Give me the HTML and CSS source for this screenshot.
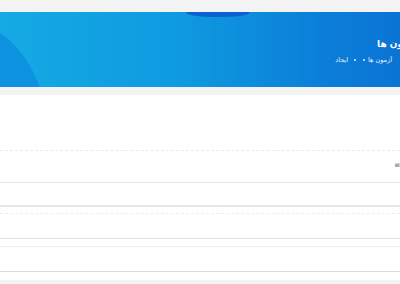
FILE: index.html
```html
<!DOCTYPE html>
<html lang="fa" dir="rtl">
<head>
    <meta charset="UTF-8">
    <meta name="viewport" content="width=device-width, initial-scale=1.0">
    <title>ایجاد آزمون</title>
    <link rel="stylesheet" href="styles.css">
</head>
<body>

<div class="topbar"></div>

<header class="hero">
    <div class="hero-inner">
        <h1 class="hero-title">آزمون ها</h1>
        <div class="crumbs">
            <span class="crumb">آزمون ها</span>
            <span class="dot"></span>
            <span class="crumb">ایجاد</span>
        </div>
    </div>
</header>

<div class="card">
    <div class="card-head"></div>
    <div class="row row-first"><span class="row-icon"></span></div>
    <div class="row row-a"></div>
    <div class="row row-b"></div>
    <div class="row row-c"></div>
    <div class="row row-d"></div>
    <div class="row row-e"></div>
    <div class="row row-f"></div>
</div>

</body>
</html>
```

FILE: styles.css
```css
body {
    margin: 0;
    padding: 0;
    background-color: #f3f3f3;
    font-family: 'DejaVu Sans', sans-serif;
    overflow: hidden;
}

.topbar {
    height: 12px;
    background-color: #f3f3f3;
}

.hero {
    height: 75px;
    background: linear-gradient(90deg, #15aae4 0%, #0e9ae0 45%, #0b7fd8 80%, #0a74d5 100%);
    position: relative;
    overflow: hidden;
}

/* decorative blobs */
.hero::before {
    content: "";
    position: absolute;
    top: 0;
    left: 186px;
    width: 64px;
    height: 5px;
    border-radius: 0 0 24px 24px / 0 0 5px 5px;
    background-color: #0d62d2;
}

.hero::after {
    content: "";
    position: absolute;
    top: 4px;
    left: -150px;
    width: 196px;
    height: 220px;
    border-radius: 50%;
    background-color: #0d92e0;
}

.hero-inner {
    position: relative;
    z-index: 1;
    margin-right: -17px;
    padding-top: 26px;
    color: #fff;
}

.hero-title {
    margin: 0;
    font-size: 9px;
    font-weight: bold;
    line-height: 12px;
}

.crumbs {
    display: flex;
    align-items: center;
    gap: 3px;
    margin-top: 6px;
    font-size: 6.5px;
    line-height: 8px;
    margin-right: 25px;
    color: #eaf5fd;
}

.crumbs::before {
    content: "";
    width: 2px;
    height: 2px;
    border-radius: 50%;
    background-color: #e6f3fc;
    margin-left: 1px;
    order: 1;
}

.crumb:first-child {
    order: 0;
}

.dot {
    order: 2;
    width: 2px;
    height: 2px;
    border-radius: 50%;
    background-color: #e6f3fc;
    margin: 0 3px;
}

.crumb:last-child {
    order: 3;
}

.card {
    margin-top: 8px;
    background-color: #fff;
}

.card-head {
    height: 55px;
    border-bottom: 1px dashed #ececec;
}

.row {
    position: relative;
}

.row-first {
    height: 31px;
    border-bottom: 1px solid #e6e6e6;
}

.row-icon {
    position: absolute;
    right: 0;
    top: 12px;
    width: 4px;
    height: 3px;
    border-top: 1px solid #d3d7db;
    border-right: 1px solid #d3d7db;
    background-color: #a4acb5;
}

.row-a {
    height: 22px;
    border-bottom: 2px solid #e5e9e9;
}

.row-b {
    height: 6px;
    border-bottom: 1px dashed #eeeeee;
}

.row-c {
    height: 24px;
    border-bottom: 1px solid #dde2e2;
}

.row-d {
    height: 7px;
    border-bottom: 1px solid #eeeeee;
}

.row-e {
    height: 24px;
    border-bottom: 1px solid #d5dde5;
}

.row-f {
    height: 8px;
}
```
